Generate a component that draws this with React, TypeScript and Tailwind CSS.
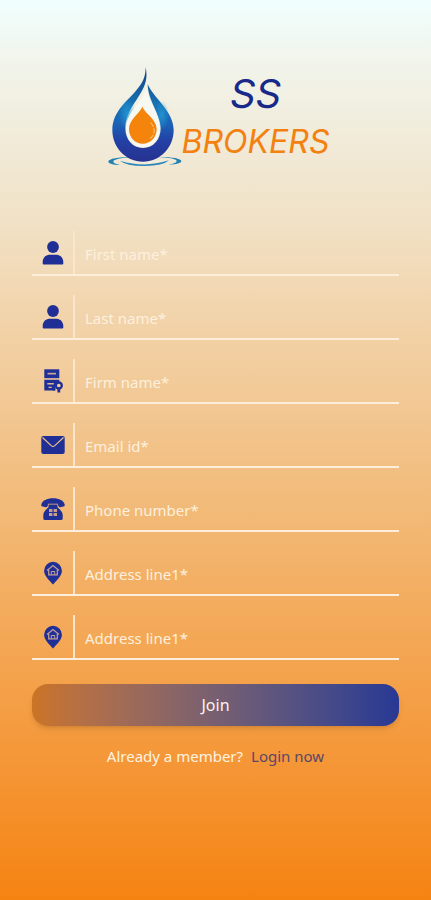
import type { ReactNode } from 'react'

interface Field {
  id: string
  label: string
  type: string
  icon: ReactNode
}

function PersonIcon() {
  return (
    <svg viewBox="0 0 24 24" className="h-6 w-6" fill="#202f96" aria-hidden="true">
      <circle cx="12" cy="6" r="5.9" />
      <path d="M1.700 22.500v-1.500c0-4.800 3.400-7.300 7.500-7.300h5.600c4.100 0 7.500 2.500 7.500 7.300v1.500c0 .6-.3 1-.9 1H2.600c-.6 0-.9-.4-.9-1z" />
    </svg>
  )
}

function FirmIcon() {
  return (
    <svg viewBox="0 0 24 24" className="h-6 w-6" aria-hidden="true">
      <path d="M3.300.300h15v8.900h-15z" fill="#202f96" />
      <path d="M6.500 3.800h8.500v1.700H6.500z" fill="#c4a596" />
      <path d="M3.300 10.700h15v2.800h-2.600l-1.700 2.500v5.500H3.300z" fill="#202f96" />
      <path d="M6.300 14h6.500v1.400H6.300zM7.500 17.700h3.200v1.200H7.500z" fill="#d9b798" />
      <path d="M11.500 18.500h3v3h-3z" fill="#202f96" />
      <circle cx="17.800" cy="16.500" r="3" fill="none" stroke="#202f96" strokeWidth="2.300" />
      <path d="M16.400 18.500h2.800v5h-2.800z" fill="#202f96" />
    </svg>
  )
}

function MailIcon() {
  return (
    <svg viewBox="0 0 24 24" className="h-6 w-6" aria-hidden="true">
      <rect x="0.300" y="3" width="23.400" height="18" rx="2" fill="#202f96" />
      <path d="M1.500 4.500l8.700 8.200q1.800 1.500 3.600 0l8.700-8.200" fill="none" stroke="#f1c48c" strokeWidth="1.100" />
    </svg>
  )
}

function PhoneIcon() {
  return (
    <svg viewBox="0 0 24 24" className="h-6 w-6" aria-hidden="true">
      <path d="M.3 7.600C1 3.700 6 1.300 12 1.300s11 2.400 11.700 6.300c.2 1.200-.3 1.800-1.200 2l-3.400.6c-.9.100-1.500-.3-1.700-1.100l-.6-2.300H7.200l-.6 2.300c-.2.800-.8 1.200-1.700 1.100L1.500 9.600C.6 9.400.1 8.800.3 7.600z" fill="#202f96" />
      <path d="M7.500 7.500h9v2.500c1 1.700 5.200 4.200 5.200 7.800v3.700c0 .9-.5 1.400-1.400 1.400H3.700c-.9 0-1.400-.5-1.400-1.400v-3.700c0-3.600 4.200-6.100 5.200-7.800z" fill="#202f96" />
      <path d="M8 11.900h3.400v3H8zM12.600 11.900H16v3h-3.400zM8 16.100h3.400v3H8zM12.600 16.100H16v3h-3.400z" fill="#c99d8c" />
    </svg>
  )
}

function AddressIcon() {
  return (
    <svg viewBox="0 0 24 24" className="h-6 w-6" aria-hidden="true">
      <path d="M12 .8a8.900 8.900 0 0 0-8.900 8.900c0 5.300 5.300 9.400 8.900 13.800 3.600-4.400 8.900-8.500 8.900-13.800A8.900 8.900 0 0 0 12 .8z" fill="#202f96" />
      <path d="M6 9.500l6-5 6 5M7.700 9v4.800h8.600V9" fill="none" stroke="#c2a09b" strokeWidth="1.200" />
      <path d="M10.300 13.500v-3h3.400v3" fill="none" stroke="#c2a09b" strokeWidth="1" />
    </svg>
  )
}

function DropLogo() {
  return (
    <svg viewBox="42 33 222 300" className="h-[100px] w-[74px] shrink-0" role="img" aria-label="SS Brokers">
      <defs>
        <linearGradient id="drop" x1="0" y1="0" x2="0" y2="1">
          <stop offset="0" stopColor="#143e83" />
          <stop offset="0.400" stopColor="#1673b5" />
          <stop offset="0.600" stopColor="#1a63b5" />
          <stop offset="0.780" stopColor="#2440a5" />
          <stop offset="1" stopColor="#26318f" />
        </linearGradient>
        <radialGradient id="shine" cx="0.500" cy="0.500" r="0.500">
          <stop offset="0" stopColor="#28a5dc" stopOpacity="0.700" />
          <stop offset="1" stopColor="#28a5dc" stopOpacity="0" />
        </radialGradient>
      </defs>
      <path d="M110 306c-35 0-67 5-67 14 0 6 15 9 35 10-12-3-20-6-20-10 0-7 24-11 52-14zM190 306c38-1 72 4 72 12 0 7-15 10-38 11 14-3 24-6 24-11 0-7-25-10-58-12z" fill="#2380b5" />
      <path d="M78 317q75 23 147-1-18 17-74 17-54 0-73-16z" fill="#2584bc" />
      <path d="M92 312q60 18 118 0-20 11-59 11t-59-11z" fill="#eef2eb" />
      <path d="M155 36c7 35-2 55-13 75-15 28-48 62-48 108 0 35 22 60 53 60s53-25 53-59c0-44-38-79-39-133 15 40 78 80 78 138 0 53-41 95-92 95s-92-42-92-95c0-56 47-88 72-119 21-25 28-43 28-70z" fill="url(#drop)" />
      <ellipse cx="100" cy="178" rx="27" ry="46" fill="url(#shine)" />
      <ellipse cx="203" cy="180" rx="23" ry="44" fill="url(#shine)" />
      <path d="M157 96c-6 40-61 75-61 123 0 34 21 58 51 58s51-24 51-58c0-44-37-79-41-123z" fill="#f6f8f1" />
      <path d="M145 155c-8 20-40 38-40 67 0 25 17 44 41 44s42-19 42-44c0-29-35-47-43-67z" fill="#f5840c" />
      <path d="M170 202c17 21 12 41-4 50" fill="none" stroke="#fbc77e" strokeWidth="3" strokeDasharray="16 4" />
    </svg>
  )
}

const FIELDS: Field[] = [
  { id: 'first-name', label: 'First name*', type: 'text', icon: <PersonIcon /> },
  { id: 'last-name', label: 'Last name*', type: 'text', icon: <PersonIcon /> },
  { id: 'firm-name', label: 'Firm name*', type: 'text', icon: <FirmIcon /> },
  { id: 'email', label: 'Email id*', type: 'email', icon: <MailIcon /> },
  { id: 'phone', label: 'Phone number*', type: 'tel', icon: <PhoneIcon /> },
  { id: 'address-1', label: 'Address line1*', type: 'text', icon: <AddressIcon /> },
  { id: 'address-2', label: 'Address line1*', type: 'text', icon: <AddressIcon /> }
]

export default function App() {
  return (
    <main className="min-h-screen bg-[linear-gradient(to_bottom,#f0fffe_0%,#f1f4eb_7%,#f1e1c5_25%,#f2d0a4_38%,#f2bd7e_54%,#f3ab5c_68%,#f59534_86%,#f58312_100%)] px-8 pt-[66px] pb-8 font-['Noto_Sans',sans-serif]">
      {/* Brand */}
      <header className="flex justify-center pl-1.5">
        <DropLogo />
        <h1 className="flex flex-col items-center pt-2 font-['Inter',sans-serif] italic">
          <span className="text-[40px] leading-10 text-[#182989]">SS</span>
          <span className="mt-2 text-[32px] leading-10 text-[#f3810f]">BROKERS</span>
        </h1>
      </header>

      <form className="mt-[65px]" onSubmit={(e) => e.preventDefault()}>
        <div className="flex flex-col gap-[19px]">
          {FIELDS.map((field) => (
            <div key={field.id} className="flex h-[45px] border-b-2 border-[#fdeedb]">
              <label htmlFor={field.id} aria-label={field.label} className="flex w-[43px] shrink-0 justify-center border-r-2 border-[#fbe6cc] pt-2.5">
                {field.icon}
              </label>
              <input
                id={field.id}
                type={field.type}
                placeholder={field.label}
                className="min-w-0 flex-1 bg-transparent pt-1 pl-2.5 text-[15px] text-white outline-none placeholder:text-[#fdf0de]"
              />
            </div>
          ))}
        </div>

        <button
          type="submit"
          className="mt-6 h-[42px] w-full rounded-2xl bg-linear-to-r from-[#cb7424] to-[#283894] text-base text-[#fdf3ea] shadow-md"
        >
          Join
        </button>
      </form>

      <p className="mt-5 flex justify-center gap-2 text-[15px] leading-5 text-[#fff3e0]">
        Already a member?
        <a href="#login" className="text-[#5b4668]">Login now</a>
      </p>
    </main>
  )
}
